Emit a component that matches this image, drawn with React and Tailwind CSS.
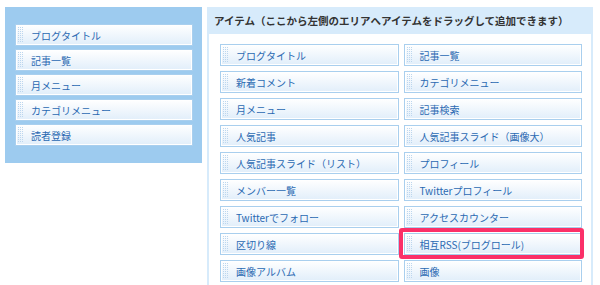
import React from 'react';

const myItems = ['ブログタイトル', '記事一覧', '月メニュー', 'カテゴリメニュー', '読者登録'];

const allItems = [
  'ブログタイトル', '記事一覧',
  '新着コメント', 'カテゴリメニュー',
  '月メニュー', '記事検索',
  '人気記事', '人気記事スライド（画像大）',
  '人気記事スライド（リスト）', 'プロフィール',
  'メンバー一覧', 'Twitterプロフィール',
  'Twitterでフォロー', 'アクセスカウンター',
  '区切り線', '相互RSS(ブログロール)',
  '画像アルバム', '画像',
];

function Grip() {
  const dots = [];
  for (let r = 0; r < 8; r++) {
    for (let c = 0; c < 3; c++) {
      dots.push(<rect key={r + '-' + c} x={c * 2} y={r * 2} width="1" height="1" fill="#bcd6ee" />);
    }
  }
  return (
    <svg width="6" height="16" viewBox="0 0 6 16" className="shrink-0">
      {dots}
    </svg>
  );
}

function Item({ label, highlight }) {
  return (
    <div className="relative h-[22px] flex items-center border border-[#a9cfee] bg-gradient-to-b from-white to-[#e1eefa] pl-[2px] shadow-[inset_0_0_0_1px_#ffffff]">
      <Grip />
      <span className="ml-[7px] text-[10px] text-[#2a69b2] whitespace-nowrap">{label}</span>
      {highlight && (
        <div className="absolute -left-[6px] -right-[3px] -top-[6px] -bottom-[5px] border-[4px] border-[#fb3068] rounded-[3px]" />
      )}
    </div>
  );
}

export default function App() {
  return (
    <div
      className="w-[600px] h-[285px] overflow-hidden bg-white flex items-start gap-[5px] pt-[7px] pl-[5px]"
      style={{ fontFamily: '"Noto Sans CJK JP", "Noto Sans", sans-serif' }}
    >
      <div className="w-[197px] bg-[#9dcbef] pt-[17px] pb-[17px] pl-[10px] pr-[9px] flex flex-col gap-[3px]">
        {myItems.map((label) => (
          <Item key={label} label={label} />
        ))}
      </div>

      <div className="w-[386px] h-[300px] bg-[#d7ebfb] px-[2px] flex flex-col">
        <div className="h-[27px] flex items-center pl-[5px] text-[10.5px] font-bold text-[#333] whitespace-nowrap">
          アイテム（ここから左側のエリアへアイテムをドラッグして追加できます）
        </div>
        <div className="flex-1 bg-white pt-[10px] pl-[11px] pr-[9px] grid grid-cols-2 gap-x-[5px] gap-y-[5px] content-start">
          {allItems.map((label) => (
            <Item key={label} label={label} highlight={label === '相互RSS(ブログロール)'} />
          ))}
        </div>
      </div>
    </div>
  );
}
